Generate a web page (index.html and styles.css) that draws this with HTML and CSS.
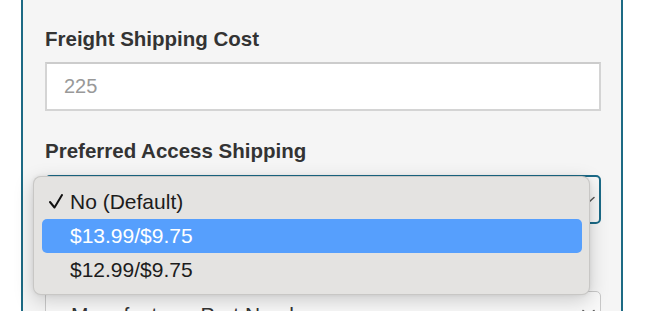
FILE: index.html
```html
<!DOCTYPE html>
<html>
<head>
<meta charset="utf-8">
<link rel="stylesheet" href="styles.css">
</head>
<body>
<div class="panel">
  <div class="field">
    <div class="label">Freight Shipping Cost</div>
    <div class="input"><span class="placeholder">225</span></div>
  </div>
  <div class="field field-menu">
    <div class="label">Preferred Access Shipping</div>
    <div class="select focused">
      <span class="value"></span>
      <svg class="chev" width="13" height="8" viewBox="0 0 13 8"><path d="M1 1.5 L6.5 6.5 L12 1.5" fill="none" stroke="#555" stroke-width="1.5" stroke-linecap="round" stroke-linejoin="round"/></svg>
    </div>
    <ul class="menu">
      <li class="item checked">
        <svg class="check" width="14" height="15" viewBox="0 0 14 15"><path d="M1 8 L5.5 13.5 L13 1" fill="none" stroke="#111" stroke-width="2" stroke-linecap="round" stroke-linejoin="round"/></svg>
        No (Default)
      </li>
      <li class="item active">$13.99/$9.75</li>
      <li class="item">$12.99/$9.75</li>
    </ul>
  </div>
  <div class="select plain">
    <span class="value">Manufacturer Part Number</span>
    <svg class="chev" width="13" height="8" viewBox="0 0 13 8"><path d="M1 1.5 L6.5 6.5 L12 1.5" fill="none" stroke="#555" stroke-width="1.5" stroke-linecap="round" stroke-linejoin="round"/></svg>
  </div>
</div>
</body>
</html>
```

FILE: styles.css
```css
html, body {
  margin: 0;
  padding: 0;
  background: #ffffff;
  overflow: hidden;
  height: 311px;
}

body {
  font-family: "Liberation Sans", Arial, sans-serif;
  color: #333333;
}

.panel {
  margin-left: 21px;
  width: 602px;
  box-sizing: border-box;
  min-height: 360px;
  background: #f5f5f5;
  border-left: 2px solid #1d6a84;
  border-right: 2px solid #1d6a84;
  padding: 28px 20px 0 22px;
}

.field {
  display: flex;
  flex-direction: column;
  margin-bottom: 29px;
}

.field-menu {
  position: relative;
  margin-bottom: 67px;
}

.label {
  font-weight: bold;
  font-size: 20.5px;
  line-height: 22px;
  color: #333333;
  margin-bottom: 12px;
}

.field-menu .label {
  margin-bottom: 13px;
}

.input {
  height: 49px;
  box-sizing: border-box;
  background: #ffffff;
  border: 2px solid #d4d4d4;
  border-top-color: #cccccc;
  display: flex;
  align-items: center;
  padding-left: 17px;
}

.placeholder {
  color: #999999;
  font-size: 20px;
}

.select {
  height: 49px;
  box-sizing: border-box;
  display: flex;
  align-items: center;
  justify-content: space-between;
  padding: 0 4px 0 24px;
  border-radius: 5px;
  font-size: 21px;
  color: #333333;
}

.select.focused {
  border: 2px solid #1b6a87;
  background: #f7f7f7;
}

.select.plain {
  border: 1px solid #c9c9c9;
  background: #f9f9f9;
  padding-left: 25px;
  padding-right: 5px;
  align-items: flex-start;
  padding-top: 11px;
}

.select.plain .chev {
  margin-top: 6px;
}

.menu {
  position: absolute;
  left: -12px;
  top: 36px;
  width: 557px;
  box-sizing: border-box;
  margin: 0;
  padding: 8px 7px 7px 8px;
  list-style: none;
  background: #e4e3e1;
  border: 1px solid rgba(0, 0, 0, 0.12);
  border-radius: 8px;
  box-shadow: 0 6px 20px rgba(0, 0, 0, 0.18), 0 0 4px rgba(0, 0, 0, 0.08);
}

.item {
  position: relative;
  height: 34px;
  line-height: 34px;
  padding-left: 28px;
  font-size: 21px;
  color: #1c1c1c;
  border-radius: 5px;
}

.item.active {
  background: #569ffd;
  color: #ffffff;
}

.check {
  position: absolute;
  left: 7px;
  top: 9px;
}
```
